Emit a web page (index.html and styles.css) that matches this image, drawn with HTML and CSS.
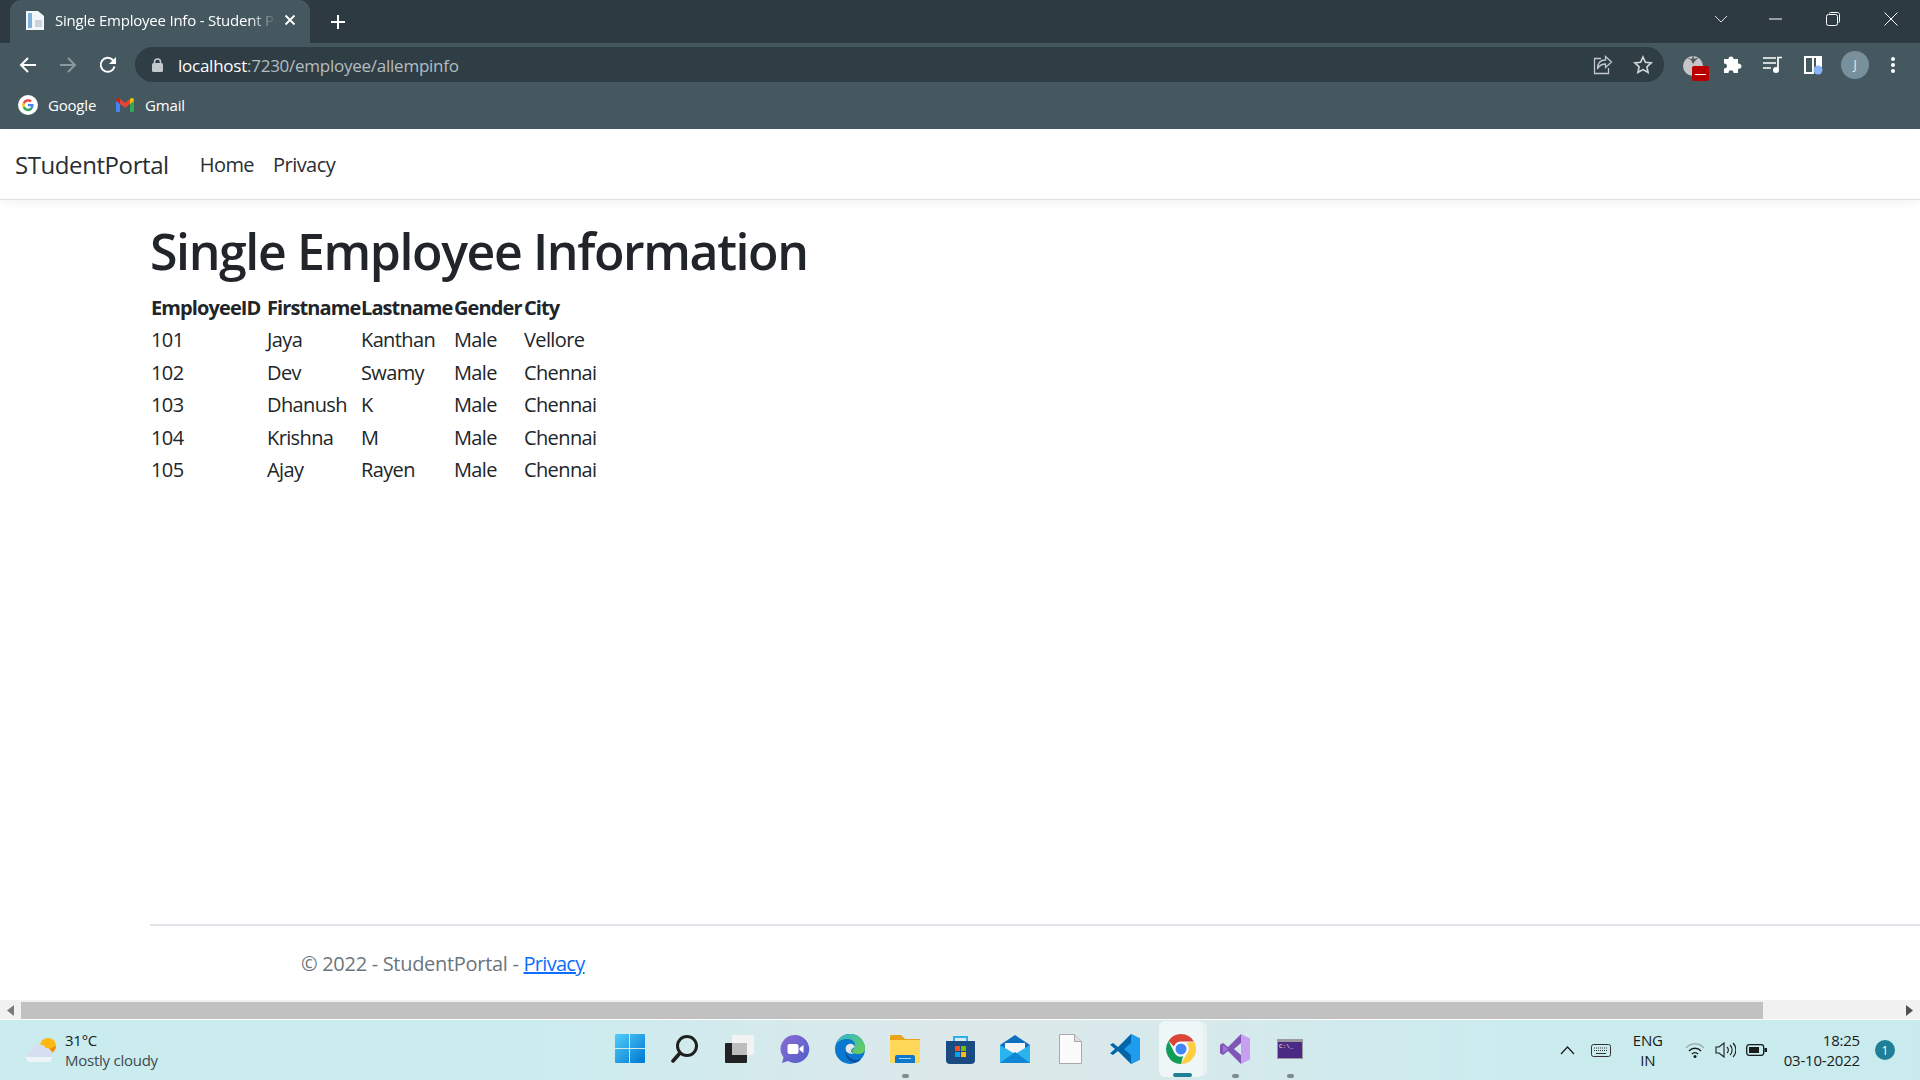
FILE: index.html
```html
<!DOCTYPE html>
<html lang="en">
<head>
<meta charset="utf-8">
<title>Single Employee Info - Student Portal</title>
<link rel="stylesheet" href="styles.css">
</head>
<body>
<div class="screen">
  <header class="chrome">
    <div class="tabstrip">
      <div class="tab">
        <svg class="favicon" width="20" height="20" viewBox="0 0 20 20"><path fill="#f4f7f9" d="M1 1h12l6 5v14H1z"/><path fill="#7fb2d8" d="M3 3h4v15H3z"/><path fill="#c9d3da" d="M10 10h7v7h-7z"/></svg>
        <span class="tab-title">Single Employee Info - Student Portal</span>
        <svg class="tab-x" width="12" height="12" viewBox="0 0 12 12"><path d="M1.5 1.5l9 9M10.500 1.500l-9 9" stroke="#fff" stroke-width="1.800"/></svg>
      </div>
      <svg class="newtab" width="16" height="16" viewBox="0 0 16 16"><path d="M8 1v14M1 8h14" stroke="#fff" stroke-width="2"/></svg>
      <div class="win-controls">
        <svg class="win-chev" width="14" height="8" viewBox="0 0 14 8"><path d="M1 1l6 6 6-6" fill="none" stroke="#d8dee1" stroke-width="1"/></svg>
        <svg class="win-min" width="14" height="2" viewBox="0 0 14 2"><path d="M0 1h13" stroke="#fff" stroke-width="1"/></svg>
        <svg class="win-max" width="14" height="14" viewBox="0 0 14 14"><path d="M3.500 1.500c0-.6.400-1 1-1h7c1 0 2 1 2 2v7c0 .6-.4 1-1 1" fill="none" stroke="#fff"/><rect x=".5" y="2.500" width="11" height="11" rx="2" fill="none" stroke="#fff"/></svg>
        <svg class="win-close" width="14" height="14" viewBox="0 0 14 14"><path d="M.5.5l13 13M13.500.5l-13 13" stroke="#fff" stroke-width="1"/></svg>
      </div>
    </div>
    <div class="toolbar">
      <svg class="nav-ic" width="18" height="18" viewBox="0 0 18 18"><path d="M17 9H2M9 2L2 9l7 7" fill="none" stroke="#fff" stroke-width="2"/></svg>
      <svg class="nav-ic" width="18" height="18" viewBox="0 0 18 18"><path d="M1 9h15M9 2l7 7-7 7" fill="none" stroke="#8b999f" stroke-width="2"/></svg>
      <svg class="nav-ic" width="18" height="18" viewBox="0 0 18 18"><path d="M15.500 10.500A7 7 0 1 1 13.800 4L16 6.200" fill="none" stroke="#fff" stroke-width="2"/><path d="M17 1v7h-7z" fill="#fff"/></svg>
      <div class="omnibox">
        <svg width="11" height="14" viewBox="0 0 11 14" class="lock"><rect y="5" width="11" height="9" rx="1.500" fill="#c3c9cc"/><path d="M2.500 5.500V4a3 3 0 0 1 6 0v1.500" fill="none" stroke="#c3c9cc" stroke-width="1.500"/></svg>
        <span class="url"><span class="url-host">localhost</span>:7230/employee/allempinfo</span>
        <svg class="omni-share" width="20" height="20" viewBox="0 0 20 20"><path d="M8 3.500H1.500v15h14V13M18.500 7L12.500 1.500V5C7 5 4.500 9 4.500 14c2-4 4-5 8-5v3.500z" fill="none" stroke="#c3c9cc" stroke-width="1.300"/></svg>
        <svg class="omni-star" width="20" height="20" viewBox="0 0 20 20"><path d="M10 2l2.400 5.300 5.800.6-4.300 3.900 1.200 5.700L10 14.600l-5.100 2.900 1.200-5.700L1.800 7.900l5.800-.6z" fill="none" stroke="#d3d8da" stroke-width="1.600"/></svg>
      </div>
      <div class="ext-group">
        <span class="ext ext-tomato">
          <svg width="24" height="24" viewBox="0 0 24 24"><circle cx="11" cy="13" r="10" fill="#c4c6c7"/><path d="M11 1l1 5 5-2-4 4-2 3-2-4-4-2 5 1z" fill="#54585a"/></svg>
          <span class="ext-badge"></span>
        </span>
        <svg class="ext" width="20" height="20" viewBox="0 0 20 20"><path fill="#fff" d="M8 1.500c1.800 0 2.500 1.200 2.500 2.500H15v4.500c1.800 0 3.500.8 3.500 2.700s-1.700 2.600-3.500 2.600V18h-4.500c0-1.700-.9-2.800-2.500-2.800S5.500 16.300 5.500 18H1v-4.500c1.700 0 3-.8 3-2.500S2.700 8.500 1 8.500V4h4.500c0-1.300.8-2.500 2.500-2.500z"/></svg>
        <svg class="ext" width="20" height="18" viewBox="0 0 20 18"><path d="M0 2h13M0 7h13M0 12h8" stroke="#fff" stroke-width="1.700"/><path d="M15 13V1.500h4" fill="none" stroke="#fff" stroke-width="1.700"/><circle cx="13" cy="14" r="3" fill="#fff"/></svg>
        <svg class="ext" width="20" height="20" viewBox="0 0 20 20"><path fill="#fff" d="M1 1h18v11h-6V3H11v16H1V1zm2 2v14h6V3z" fill-rule="evenodd"/><circle cx="15" cy="15" r="4.500" fill="#8ab4f8"/></svg>
        <span class="avatar">J</span>
        <svg class="ext" width="4" height="16" viewBox="0 0 4 16"><circle cx="2" cy="2" r="2" fill="#fff"/><circle cx="2" cy="8" r="2" fill="#fff"/><circle cx="2" cy="14" r="2" fill="#fff"/></svg>
      </div>
    </div>
    <div class="bookmarks">
      <span class="bm">
        <svg width="20" height="20" viewBox="0 0 20 20"><circle cx="10" cy="10" r="10" fill="#fff"/><path d="M15.500 10.200c0-.4 0-.8-.1-1.200H10v2.200h3.100a2.700 2.700 0 0 1-1.100 1.700v1.500h1.900c1-1 1.600-2.400 1.600-4.200z" fill="#4285f4"/><path d="M10 16c1.500 0 2.900-.5 3.900-1.500L12 13c-.5.400-1.200.6-2 .6-1.500 0-2.700-1-3.200-2.400H4.900v1.500A6 6 0 0 0 10 16z" fill="#34a853"/><path d="M6.800 11.200a3.600 3.600 0 0 1 0-2.400V7.300H4.900a6 6 0 0 0 0 5.400z" fill="#fbbc05"/><path d="M10 6.400c.9 0 1.600.3 2.200.9l1.700-1.700A6 6 0 0 0 4.900 7.300l1.900 1.500C7.300 7.400 8.500 6.400 10 6.400z" fill="#ea4335"/></svg>
        Google
      </span>
      <span class="bm">
        <svg width="18" height="14" viewBox="0 0 18 14"><path d="M0 2v10.500c0 .8.600 1.500 1.300 1.500H4V6z" fill="#4285f4"/><path d="M14 14h2.700c.7 0 1.300-.7 1.300-1.500V2l-4 4z" fill="#34a853"/><path d="M14 1v5l4-3.300V2c0-1.700-1.900-2.600-3.200-1.600z" fill="#fbbc05"/><path d="M4 6V1l5 3.800L14 1v5L9 9.700z" fill="#ea4335"/><path d="M0 2v.7L4 6V1L3.200.4C1.900-.6 0 .3 0 2z" fill="#c5221f"/></svg>
        Gmail
      </span>
    </div>
  </header>

  <nav class="navbar">
    <a class="brand">STudentPortal</a>
    <a class="nav-link">Home</a>
    <a class="nav-link">Privacy</a>
  </nav>

  <main class="page">
    <h1 class="title">Single Employee Information</h1>
    <table class="emp-table">
      <colgroup><col class="c1"><col class="c2"><col class="c3"><col class="c4"><col class="c5"></colgroup>
      <thead>
        <tr><th>EmployeeID</th><th>Firstname</th><th>Lastname</th><th>Gender</th><th>City</th></tr>
      </thead>
      <tbody>
        <tr><td>101</td><td>Jaya</td><td>Kanthan</td><td>Male</td><td>Vellore</td></tr>
        <tr><td>102</td><td>Dev</td><td>Swamy</td><td>Male</td><td>Chennai</td></tr>
        <tr><td>103</td><td>Dhanush</td><td>K</td><td>Male</td><td>Chennai</td></tr>
        <tr><td>104</td><td>Krishna</td><td>M</td><td>Male</td><td>Chennai</td></tr>
        <tr><td>105</td><td>Ajay</td><td>Rayen</td><td>Male</td><td>Chennai</td></tr>
      </tbody>
    </table>
  </main>

  <footer class="footer">
    <span class="foot-text">© 2022 - StudentPortal - <a class="foot-link">Privacy</a></span>
  </footer>

  <div class="hscroll">
    <div class="sb-btn"><svg width="7" height="11" viewBox="0 0 7 11"><path d="M7 0v11L0 5.500z" fill="#7a7a7a"/></svg></div>
    <div class="sb-track"><div class="sb-thumb"></div></div>
    <div class="sb-btn"><svg width="7" height="11" viewBox="0 0 7 11"><path d="M0 0v11l7-5.500z" fill="#505050"/></svg></div>
  </div>

  <div class="taskbar">
    <div class="weather">
      <svg width="32" height="26" viewBox="0 0 32 26"><circle cx="23" cy="9" r="8" fill="#fdb813"/><path d="M31 9a8 8 0 0 1-3 6l-4-3z" fill="#f08c00"/><path d="M7 25a5.500 5.500 0 0 1-1-10.900A8.500 8.500 0 0 1 21 11a6 6 0 0 1 6 7v3a4 4 0 0 1-4 4z" fill="#d5dff0"/><path d="M5 25h19c2 0 3-2 3-5H1c0 3 2 5 4 5z" fill="#eef3f8"/></svg>
      <div class="weather-text"><span class="w-temp">31°C</span><span class="w-desc">Mostly cloudy</span></div>
    </div>
    <div class="tb-icons">
      <span class="tb"><svg width="30" height="30" viewBox="0 0 30 30"><defs><linearGradient id="gw" x1="0" y1="0" x2="1" y2="1"><stop offset="0" stop-color="#52cdfb"/><stop offset="1" stop-color="#0075d0"/></linearGradient></defs><path fill="url(#gw)" d="M1 0h13v14H0V1a1 1 0 0 1 1-1zM15 0h14a1 1 0 0 1 1 1v13H15zM0 15h14v14H1a1 1 0 0 1-1-1zM15 15h15v13a1 1 0 0 1-1 1H15z"/></svg></span>
      <span class="tb"><svg width="28" height="30" viewBox="0 0 28 30"><circle cx="16" cy="12" r="9.500" fill="none" stroke="#1f1f1f" stroke-width="3"/><path d="M9 19l-7 8" stroke="#1f1f1f" stroke-width="3.500" stroke-linecap="round"/></svg></span>
      <span class="tb"><svg width="30" height="28" viewBox="0 0 30 28"><rect x="0" y="8" width="22" height="20" rx="1" fill="#222"/><rect x="7" y="0" width="22" height="20" rx="1" fill="#f4f4f4" fill-opacity=".92"/><rect x="7" y="8" width="15" height="12" fill="#bdbdbd"/></svg></span>
      <span class="tb"><svg width="30" height="30" viewBox="0 0 30 30"><defs><linearGradient id="gc" x1="0" y1="0" x2="1" y2="1"><stop offset="0" stop-color="#8d6bd6"/><stop offset="1" stop-color="#4f5fc8"/></linearGradient></defs><path fill="url(#gc)" d="M15 1a14 14 0 1 1-7 26l-6 2 1.500-5.500A14 14 0 0 1 15 1z"/><rect x="7.500" y="10" width="11" height="10" rx="2" fill="#fff"/><path d="M19.500 14l4-3v8l-4-3z" fill="#fff"/></svg></span>
      <span class="tb"><svg width="30" height="30" viewBox="0 0 30 30"><defs><linearGradient id="ge" x1="0" y1="0" x2="1" y2="1"><stop offset="0" stop-color="#2fb6d8"/><stop offset="1" stop-color="#6fd04a"/></linearGradient></defs><circle cx="15" cy="15" r="15" fill="#0a78d0"/><path fill="url(#ge)" d="M1 10C4 3 10 0 15 0c9 0 15 6 15 15 0 3-3 5-7 5-4 0-6-1-6-3 0-2 3-2 3-6 0-3-3-6-7-6-6 0-10 2-12 5z"/><path fill="#e3e9e9" d="M20 13c-1-3-4-4-6-3-3 1-4 4-3 7 1 2 4 3 8 3-2-1-3-2-3-3 0-2 2-3 4-4z"/><path fill="#0c4f9e" d="M11 14c-2 5 0 11 6 14 4 1 7 0 9-3-4 2-9 1-12-2-3-3-4-6-3-9z"/></svg></span>
      <span class="tb tb-run"><svg width="30" height="28" viewBox="0 0 30 28"><path fill="#e8a317" d="M0 1.500C0 .7.700 0 1.500 0H11l4 4h15v6H0z"/><path fill="#ffd85a" d="M0 5h30v21.500c0 .8-.7 1.500-1.500 1.500h-27C.7 28 0 27.300 0 26.500z"/><path fill="#0d78c9" d="M5 22a2 2 0 0 1 2-2h16a2 2 0 0 1 2 2v6H5z"/><path fill="#9fd5f5" d="M9 23h12v1H9z"/></svg></span>
      <span class="tb"><svg width="29" height="29" viewBox="0 0 29 29"><path d="M8 7V2h13v5" fill="none" stroke="#2fb0ee" stroke-width="2"/><path fill="#1a4a82" d="M0 6h29v19a4 4 0 0 1-4 4H4a4 4 0 0 1-4-4z"/><path fill="#f25022" d="M9 11h5v5H9z"/><path fill="#7fba00" d="M15 11h5v5h-5z"/><path fill="#00a4ef" d="M9 17h5v5H9z"/><path fill="#ffb900" d="M15 17h5v5h-5z"/></svg></span>
      <span class="tb"><svg width="30" height="28" viewBox="0 0 30 28"><path fill="#0e6fbf" d="M15 0L0 10v18h30V10z"/><path fill="#f4f5f6" d="M5 8h20v6l-10 7-10-7z"/><path fill="#2bb5ee" d="M0 10l15 9 15-9v18H0z"/><path fill="#0f86d6" d="M0 28l15-11 15 11z"/></svg></span>
      <span class="tb"><svg width="23" height="30" viewBox="0 0 23 30"><path fill="#fbfbfb" stroke="#a9a9a9" stroke-width="1" d="M.5.5h15l7 7v22H.5z"/><path fill="#dedede" stroke="#a9a9a9" d="M15.500.5v7h7"/></svg></span>
      <span class="tb"><svg width="30" height="30" viewBox="0 0 30 30"><path fill="#0065a9" d="M21 0l9 4.500v21L21 30 8 17l-5 4-3-1.800L5 15 0 10.800 3 9l5 4z"/><path fill="#1f9cf0" d="M21 0l9 4.500v21L21 30V21l-7-6 7-6z"/></svg></span>
      <span class="tb tb-active"><svg width="30" height="30" viewBox="0 0 30 30"><path fill="#db4437" d="M15 0a15 15 0 0 1 13 7.500H15A7.500 7.500 0 0 0 8 12.500L2.500 7A15 15 0 0 1 15 0z"/><path fill="#ffcd40" d="M28 7.500A15 15 0 0 1 15 30l6.500-11.200A7.500 7.500 0 0 0 20.500 9z"/><path fill="#0f9d58" d="M2.500 7L8.500 19A7.500 7.500 0 0 0 17 22.300L15 30A15 15 0 0 1 2.500 7z"/><circle cx="15" cy="15" r="7" fill="#fff"/><circle cx="15" cy="15" r="5.500" fill="#4285f4"/></svg></span>
      <span class="tb tb-run"><svg width="30" height="30" viewBox="0 0 30 30"><path fill="#c79ff0" d="M21 0l9 4.500v21L21 30z"/><path fill="#7f56b5" d="M21 0L8 13l-5-4-3 1.800V19.200L3 21l5-4 13 13v-9l-7-6 7-6z"/><path fill="#a374dd" d="M3 11l5 4-5 4z"/></svg></span>
      <span class="tb tb-run"><svg width="26" height="20" viewBox="0 0 26 20"><rect width="26" height="20" fill="#9a9a9f"/><rect x="1" y="3" width="24" height="16" fill="#4b2a86"/><text x="2" y="9" font-size="6" font-family="Liberation Mono" fill="#e8e8e8">C:\_</text></svg></span>
    </div>
    <div class="tray">
      <svg width="15" height="9" viewBox="0 0 15 9"><path d="M1 8l6.500-7L14 8" fill="none" stroke="#1b1b1b" stroke-width="1.200"/></svg>
      <svg class="tray-kb" width="20" height="13" viewBox="0 0 20 13"><rect x=".5" y=".5" width="19" height="12" rx="2" fill="none" stroke="#333"/><path d="M3 4h14M3 6.500h14" stroke="#333" stroke-dasharray="1 1"/><path d="M5 9.500h10" stroke="#333"/></svg>
      <div class="lang"><span>ENG</span><span>IN</span></div>
      <div class="tray-sys">
        <svg width="20" height="15" viewBox="0 0 20 15"><path d="M1 5a12 12 0 0 1 18 0" fill="none" stroke="#9aa5a7" stroke-width="1.200"/><path d="M4 8a8 8 0 0 1 12 0M7 11a4 4 0 0 1 6 0" fill="none" stroke="#1b1b1b" stroke-width="1.400"/><circle cx="10" cy="13.500" r="1.500" fill="#1b1b1b"/></svg>
        <svg width="21" height="16" viewBox="0 0 21 16"><path d="M1 5h3l5-4v14l-5-4H1z" fill="none" stroke="#1b1b1b" stroke-width="1.100"/><path d="M12 5a4 4 0 0 1 0 6M15 3a7 7 0 0 1 0 10M18 1a10 10 0 0 1 0 14" fill="none" stroke="#1b1b1b" stroke-width="1.100"/></svg>
        <svg width="21" height="12" viewBox="0 0 21 12"><rect x=".7" y=".7" width="17" height="10.600" rx="2.500" fill="none" stroke="#1b1b1b" stroke-width="1.300"/><rect x="3" y="3" width="10" height="6" fill="#1b1b1b"/><rect x="18.500" y="4" width="2.500" height="4" fill="#1b1b1b"/></svg>
      </div>
      <div class="clock"><span>18:25</span><span>03-10-2022</span></div>
      <span class="notif">1</span>
    </div>
  </div>
</div>
</body>
</html>
```
FILE: styles.css
```css
* { box-sizing: border-box; }
html, body { margin: 0; height: 100%; overflow: hidden; }
body { font-family: "Open Sans", "Noto Sans", sans-serif; color: #212529; background: #fff; }
.screen { height: 1080px; width: 1920px; display: flex; flex-direction: column; }

/* Browser chrome */
.chrome { background: #45585f; color: #fff; flex: none; height: 129px; display: flex; flex-direction: column; }
.tabstrip { height: 43px; background: #2e3a41; display: flex; align-items: center; padding-left: 10px; }
.tab { width: 300px; height: 43px; background: #45585f; border-radius: 11px 11px 0 0; display: flex; align-items: center; padding: 0 14px 3px 15px; }
.favicon { flex: none; }
.tab-title { flex: 1; margin-left: 10px; font-size: 15px; letter-spacing: -.22px; white-space: nowrap; overflow: hidden; -webkit-mask-image: linear-gradient(90deg, #000 88%, transparent); mask-image: linear-gradient(90deg, #000 88%, transparent); }
.tab-x { flex: none; margin-left: 8px; }
.newtab { margin-left: 20px; }
.win-controls { margin-left: auto; display: flex; align-items: center; height: 100%; padding-bottom: 6px; }
.win-chev { margin-right: 41px; }
.win-min { margin-right: 43px; }
.win-max { margin-right: 44px; }
.win-close { margin-right: 22px; }

.toolbar { height: 43px; display: flex; align-items: center; padding-left: 19px; }
.nav-ic { flex: none; margin-right: 22px; }
.omnibox { flex: none; width: 1529px; height: 35px; margin-left: -4px; background: #2f3d45; border-radius: 18px; display: flex; align-items: center; padding-left: 17px; }
.lock { flex: none; }
.url { margin-left: 15px; font-size: 17px; letter-spacing: -.25px; color: #b4bdc1; white-space: nowrap; padding-top: 2px; }
.url-host { color: #fff; }
.omni-share { margin-left: auto; }
.omni-star { margin-left: 20px; margin-right: 11px; }
.ext-group { flex: none; display: flex; align-items: center; margin-left: 18px; }
.ext { flex: none; margin-right: 20px; }
.ext-tomato { position: relative; width: 24px; height: 24px; margin-right: 17px; display: block; }
.ext-badge { position: absolute; left: 10px; top: 13px; width: 17px; height: 15px; background: #b80000; border-radius: 2px; }
.ext-badge::after { content: ""; position: absolute; left: 3px; right: 3px; top: 8px; height: 1px; background: #fff; }
.avatar { flex: none; width: 28px; height: 28px; border-radius: 50%; background: #78909c; color: #e8ecee; display: flex; align-items: center; justify-content: center; font-size: 12px; margin-right: 22px; margin-left: -2px; }

.bookmarks { height: 43px; display: flex; align-items: center; padding-left: 18px; font-size: 15px; letter-spacing: -.2px; gap: 20px; padding-bottom: 5px; }
.bm { display: flex; align-items: center; gap: 11px; }
.bm:first-child { gap: 10px; }

/* App navbar */
.navbar { flex: none; height: 71px; border-bottom: 1px solid #dfe0e2; box-shadow: 0 3px 10px rgba(0,0,0,.05); display: flex; align-items: center; padding-left: 15px; background: #fff; }
.brand { font-size: 24px; letter-spacing: -.42px; color: #2a2e32; margin-right: 31px; }
.nav-link { font-size: 20px; letter-spacing: -.55px; color: #2a2e32; margin-right: 19px; }

/* Content */
.page { flex: 1; padding: 21px 0 0 150px; }
.title { margin: 0 0 10px; font-size: 50px; line-height: 60px; font-weight: 600; letter-spacing: -1.39px; color: #212529; }
.emp-table { border-collapse: collapse; table-layout: fixed; width: 500px; font-size: 20px; letter-spacing: -.62px; }
.c1 { width: 116px; } .c2 { width: 94px; } .c3 { width: 93px; } .c4 { width: 70px; } .c5 { width: 127px; }
.emp-table th, .emp-table td { padding: 0 1px; text-align: left; height: 32.5px; white-space: nowrap; }
.emp-table th { font-weight: 700; letter-spacing: -.9px; }

.footer { flex: none; height: 76px; margin-left: 150px; border-top: 2px solid #e3e3ea; padding: 24px 0 0 151px; font-size: 20px; letter-spacing: -.3px; color: #6c757d; line-height: 27px; }
.foot-link { color: #0d6efd; text-decoration: underline; letter-spacing: -.7px; }

/* Page scrollbar */
.hscroll { flex: none; height: 20px; background: #f1f1f1; border-bottom: 1px solid #fff; padding: 2px 0 0; display: flex; }
.sb-btn { width: 21px; flex: none; display: flex; align-items: center; justify-content: center; }
.sb-track { flex: 1; }
.sb-thumb { width: 1742px; height: 100%; background: #c1c1c1; }

/* Windows taskbar */
.taskbar { flex: none; height: 60px; background: linear-gradient(90deg, #caecef 0%, #cbecef 28%, #dde8ea 50%, #d8e9eb 60%, #caecef 80%, #c9ebee 100%); display: grid; grid-template-columns: 1fr auto 1fr; align-items: center; }
.weather { display: flex; align-items: center; padding-left: 25px; }
.weather-text { display: flex; flex-direction: column; margin-left: 8px; font-size: 15px; line-height: 20px; letter-spacing: -.25px; }
.w-temp { color: #1b1b1b; }
.w-desc { color: #3f4a4d; }
.tb-icons { display: flex; padding-bottom: 2px; }
.tb { width: 55px; height: 56px; display: flex; align-items: center; justify-content: center; position: relative; }
.tb-run::after { content: ""; position: absolute; bottom: -1px; left: 24px; width: 7px; height: 4px; border-radius: 2px; background: #7f8a8e; }
.tb-active { background: #eef6f7; border-radius: 6px; box-shadow: 5px 0 0 -1px #e6f1f2; width: 44px; margin: 0 5px 0 6px; }
.tb-active::after { content: ""; position: absolute; bottom: 0; left: 14px; width: 19px; height: 4px; border-radius: 2px; background: #1f7f96; }
.tray { display: flex; align-items: center; justify-content: flex-end; font-size: 15px; color: #1b1b1b; }
.tray-kb { margin-left: 16px; }
.lang { display: flex; flex-direction: column; align-items: center; margin-left: 22px; line-height: 20px; font-size: 15px; letter-spacing: -.2px; }
.tray-sys { display: flex; align-items: center; gap: 10px; margin-left: 22px; }
.clock { display: flex; flex-direction: column; align-items: flex-end; margin-left: 17px; line-height: 20px; font-size: 15px; letter-spacing: -.2px; }
.notif { width: 20px; height: 20px; border-radius: 50%; background: #1e7f96; color: #fff; font-size: 12px; display: flex; align-items: center; justify-content: center; margin: 0 25px 0 15px; }
```
